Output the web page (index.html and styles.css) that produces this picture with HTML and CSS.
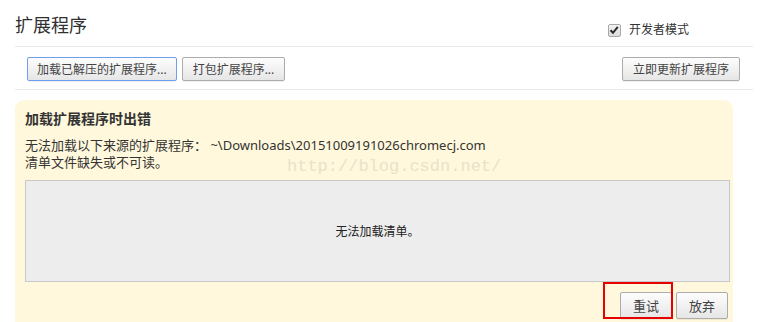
FILE: index.html
```html
<!DOCTYPE html>
<html>
<head>
    <title>扩展程序</title>
    <link rel="stylesheet" href="styles.css">
</head>
<body>
    <div class="page">
        <div class="header">
            <h1>扩展程序</h1>
            <label class="dev-mode">
                <span class="checkbox">
                    <svg width="10" height="10" viewBox="0 0 10 10"><path d="M1.5 5.2 L4 7.8 L8.8 1.8" fill="none" stroke="#2a2a2a" stroke-width="2"/></svg>
                </span>
                开发者模式
            </label>
        </div>

        <div class="toolbar">
            <button class="btn focused">加载已解压的扩展程序...</button>
            <button class="btn">打包扩展程序...</button>
            <button class="btn update">立即更新扩展程序</button>
        </div>

        <div class="error-panel">
            <h2>加载扩展程序时出错</h2>
            <p>无法加载以下来源的扩展程序： ~\Downloads\20151009191026chromecj.com<br>清单文件缺失或不可读。</p>
            <div class="manifest">无法加载清单。</div>
            <div class="actions">
                <button class="btn big">重试</button>
                <button class="btn big">放弃</button>
                <div class="highlight"></div>
            </div>
            <div class="watermark">http://blog.csdn.net/</div>
        </div>
    </div>
</body>
</html>
```

FILE: styles.css
```css
body {
    margin: 0;
    padding: 0;
    background: #fff;
    font-family: "Noto Sans", "Noto Sans CJK SC", sans-serif;
    color: #333;
    overflow: hidden;
}
.page {
    margin: 0 13px 0 15px;
}
.header {
    display: flex;
    align-items: flex-start;
    justify-content: space-between;
    padding: 13px 0 9px;
    border-bottom: 1px solid #eaeaea;
}
.header h1 {
    margin: 0;
    font-size: 18px;
    line-height: 24px;
    font-weight: normal;
    color: #303030;
}
.dev-mode {
    display: flex;
    align-items: center;
    gap: 8px;
    margin: 10px 64px 0 0;
    font-size: 12px;
    line-height: 14px;
    color: #333;
}
.checkbox {
    width: 11px;
    height: 11px;
    border: 1px solid #a8a8a8;
    border-radius: 2px;
    background: linear-gradient(#f4f4f4, #dcdcdc);
    display: flex;
    align-items: center;
    justify-content: center;
}
.toolbar {
    display: flex;
    gap: 5px;
    padding: 10px 13px 8px 12px;
    border-bottom: 1px solid #eaeaea;
}
.btn {
    height: 24px;
    padding: 0 10px;
    font-family: "Noto Sans", "Noto Sans CJK SC", sans-serif;
    font-size: 12px;
    color: #444;
    background: linear-gradient(#fdfdfd, #e6e6e6);
    border: 1px solid #acacac;
    border-radius: 2px;
    box-shadow: 0 1px 0 rgba(0,0,0,0.06);
}
.btn.focused {
    padding: 0 9px;
    border-color: #6f9df0;
}
.btn.update {
    margin-left: auto;
}
.btn.big {
    height: 27px;
    padding: 0 12px;
    font-size: 13px;
}
.error-panel {
    position: relative;
    width: 705px;
    height: 220px;
    margin-top: 10px;
    padding: 10px 3px 0 10px;
    background: #fff8dc;
    border-radius: 9px 9px 0 0;
}
.error-panel h2 {
    margin: 0;
    font-size: 14px;
    line-height: 18px;
    font-weight: bold;
    color: #333;
}
.error-panel p {
    margin: 9px 0 0;
    font-size: 13px;
    line-height: 17px;
}
.manifest {
    height: 100px;
    margin-top: 9px;
    display: flex;
    align-items: center;
    justify-content: center;
    background: #ededed;
    border: 1px solid #c8c8c8;
    font-size: 12px;
    color: #222;
}
.actions {
    position: relative;
    display: flex;
    justify-content: flex-end;
    gap: 4px;
    margin-top: 10px;
    padding-right: 2px;
}
.highlight {
    position: absolute;
    top: -10px;
    right: 57px;
    width: 70px;
    height: 37px;
    box-sizing: border-box;
    border: 2px solid #e60000;
}
.watermark {
    position: absolute;
    left: 272px;
    top: 57px;
    font-family: "Liberation Mono", monospace;
    font-size: 17px;
    color: #e9e2ca;
}
```
